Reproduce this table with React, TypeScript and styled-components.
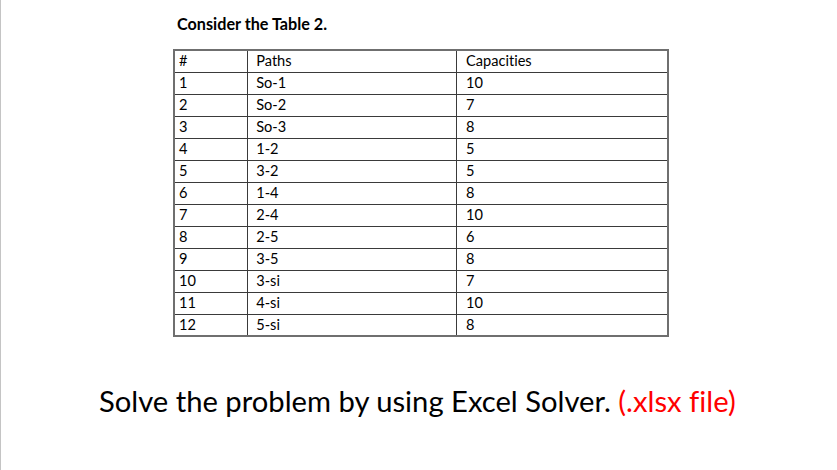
import React from 'react';
import styled, { createGlobalStyle } from 'styled-components';

const GlobalStyle = createGlobalStyle`
  html, body {
    margin: 0;
    padding: 0;
    background: #ffffff;
  }
  body {
    font-family: Lato, "Open Sans", sans-serif;
    font-variant-ligatures: none;
    color: #000;
  }
`;

const Slide = styled.div`
  width: 837px;
  height: 470px;
  box-sizing: border-box;
  border-left: 1px solid #c4c4c4;
  display: flex;
  flex-direction: column;
  overflow: hidden;
`;

const Title = styled.h3`
  margin: 14px 0 0 176px;
  font-size: 16.2px;
  font-weight: bold;
  line-height: 20px;
`;

const Grid = styled.table`
  margin: 15px 0 0 172px;
  width: 496px;
  border-collapse: collapse;
  border: 2px solid #6f6f6f;
  font-size: 14.6px;
`;

const Row = styled.tr`
  height: 22px;
`;

const Cell = styled.td<{ $w: number; $pad: number }>`
  width: ${(p) => p.$w}px;
  padding: 0 0 0 ${(p) => p.$pad}px;
  border: 1px solid #3a3a3a;
  line-height: 20px;
  vertical-align: middle;
  text-align: left;
`;

const Note = styled.p`
  margin: 44px 0 0 98px;
  font-size: 29.2px;
  line-height: 40px;
  white-space: nowrap;
`;

const Red = styled.span`
  color: #ff0000;
`;

const rows: [string, string, string][] = [
  ['#', 'Paths', 'Capacities'],
  ['1', 'So-1', '10'],
  ['2', 'So-2', '7'],
  ['3', 'So-3', '8'],
  ['4', '1-2', '5'],
  ['5', '3-2', '5'],
  ['6', '1-4', '8'],
  ['7', '2-4', '10'],
  ['8', '2-5', '6'],
  ['9', '3-5', '8'],
  ['10', '3-si', '7'],
  ['11', '4-si', '10'],
  ['12', '5-si', '8'],
];

export default function App() {
  return (
    <>
      <GlobalStyle />
      <Slide>
        <Title>Consider the Table 2.</Title>
        <Grid>
          <tbody>
            {rows.map((r) => (
              <Row key={r[0]}>
                <Cell $w={72} $pad={4}>{r[0]}</Cell>
                <Cell $w={212} $pad={8}>{r[1]}</Cell>
                <Cell $w={211} $pad={9}>{r[2]}</Cell>
              </Row>
            ))}
          </tbody>
        </Grid>
        <Note>
          Solve the problem by using Excel Solver. <Red>(.xlsx file)</Red>
        </Note>
      </Slide>
    </>
  );
}
